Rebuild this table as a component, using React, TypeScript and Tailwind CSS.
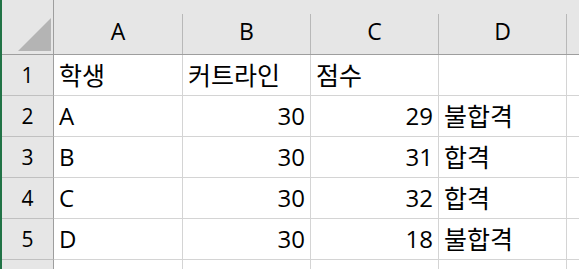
const rows = [
  { n: '1', a: '학생', b: '커트라인', c: '점수', d: '', num: false, ko: true },
  { n: '2', a: 'A', b: '30', c: '29', d: '불합격', num: true, ko: false },
  { n: '3', a: 'B', b: '30', c: '31', d: '합격', num: true, ko: false },
  { n: '4', a: 'C', b: '30', c: '32', d: '합격', num: true, ko: false },
  { n: '5', a: 'D', b: '30', c: '18', d: '불합격', num: true, ko: false },
]

const cols = ['A', 'B', 'C', 'D']

const font = { fontFamily: '"Open Sans", "Noto Sans CJK KR", sans-serif' }

function Ko({ children }: { children: string }) {
  return <span className="text-[25px] leading-none">{children}</span>
}

export default function App() {
  return (
    <div className="w-[579px] h-[269px] overflow-hidden flex bg-white text-black" style={font}>
      <div className="w-[2px] shrink-0 bg-[#217346]" />
      <div className="grid grid-cols-[52px_129px_128px_128px_128px_1fr] grid-rows-[55px_repeat(5,41px)_41px] flex-1">
        {/* corner */}
        <div className="bg-[#e6e6e6] border-b border-r border-[#9e9e9e] relative">
          <svg width="52" height="55" className="absolute left-0 top-0">
            <polygon points="49,18 49,51 16,51" fill="#b4b4b4" />
          </svg>
        </div>
        {cols.map((c) => (
          <div key={c} className="bg-[#e6e6e6] border-b border-[#9e9e9e] flex flex-col">
            <div className="h-[14px]" />
            <div className="flex-1 border-r border-[#b8b8b8] flex items-center justify-center pb-[6px] text-[23px] leading-none">
              {c}
            </div>
          </div>
        ))}
        <div className="bg-[#e6e6e6] border-b border-[#9e9e9e]" />

        {rows.map((r) => (
          <div key={r.n} className="contents">
            <div className="bg-[#e6e6e6] border-r border-b border-r-[#9e9e9e] border-b-[#c0c0c0] flex items-center justify-center text-[21px] leading-none">
              {r.n}
            </div>
            <div className="border-r border-b border-[#d4d4d4] flex items-center pl-[5px] text-[24px] leading-none">
              {r.ko ? <Ko>{r.a}</Ko> : r.a}
            </div>
            <div
              className={`border-r border-b border-[#d4d4d4] flex items-center text-[24px] leading-none ${
                r.num ? 'justify-end pr-[5px]' : 'pl-[5px]'
              }`}
            >
              {r.ko ? <Ko>{r.b}</Ko> : r.b}
            </div>
            <div
              className={`border-r border-b border-[#d4d4d4] flex items-center text-[24px] leading-none ${
                r.num ? 'justify-end pr-[5px]' : 'pl-[5px]'
              }`}
            >
              {r.ko ? <Ko>{r.c}</Ko> : r.c}
            </div>
            <div className="border-r border-b border-[#d4d4d4] flex items-center pl-[5px] text-[24px] leading-none">
              {r.d && <Ko>{r.d}</Ko>}
            </div>
            <div className="border-b border-[#d4d4d4]" />
          </div>
        ))}

        <div className="bg-[#e6e6e6] border-r border-[#9e9e9e]" />
        <div className="border-r border-[#d4d4d4]" />
        <div className="border-r border-[#d4d4d4]" />
        <div className="border-r border-[#d4d4d4]" />
        <div className="border-r border-[#d4d4d4]" />
        <div />
      </div>
    </div>
  )
}
